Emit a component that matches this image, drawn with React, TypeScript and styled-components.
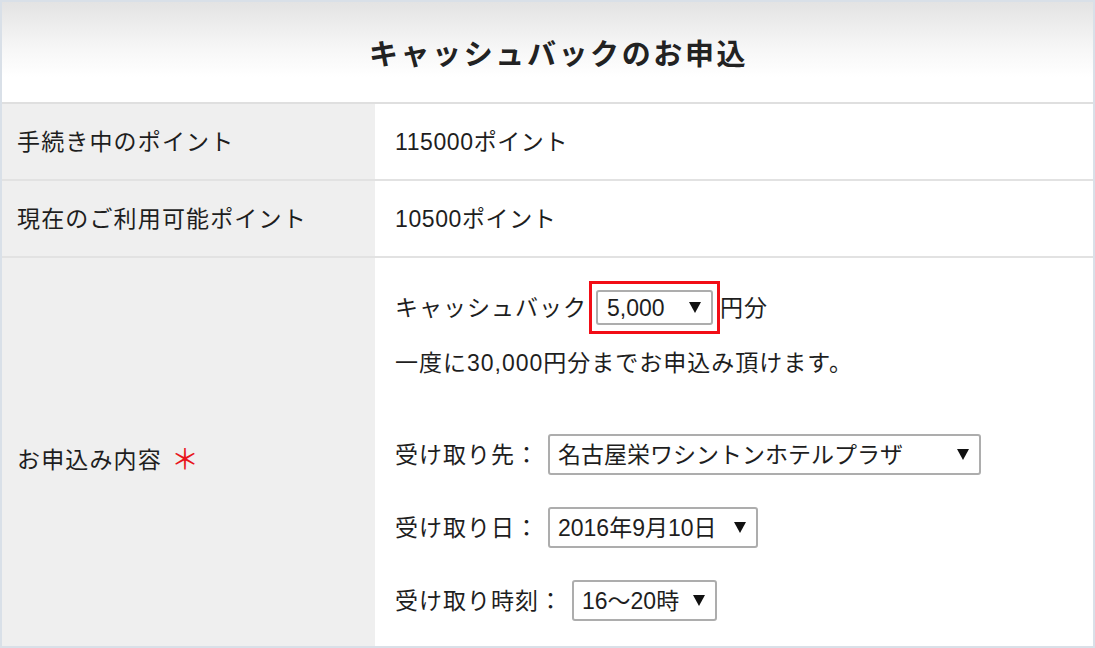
import styled, { createGlobalStyle } from 'styled-components';

const GlobalStyle = createGlobalStyle`
  html, body {
    margin: 0;
    padding: 0;
    background: #ffffff;
  }
  body {
    font-family: 'Liberation Sans', 'Noto Sans CJK JP', sans-serif;
    color: #1e1e1e;
  }
`;

const Frame = styled.div`
  box-sizing: border-box;
  width: 1095px;
  height: 648px;
  border: 2px solid #d9e0e8;
  display: flex;
  flex-direction: column;
  overflow: hidden;
`;

const Header = styled.div`
  height: 100px;
  flex-shrink: 0;
  border-bottom: 2px solid #dfdfdf;
  background: linear-gradient(to bottom, #e3e3e3 0%, #f6f6f6 45%, #ffffff 75%);
  display: flex;
  align-items: center;
  justify-content: center;
  padding-left: 22px;
`;

const Title = styled.h1`
  margin: 0;
  font-size: 29px;
  font-weight: 700;
  letter-spacing: 2.6px;
  color: #222;
`;

const Row = styled.div<{ $tall?: boolean }>`
  display: grid;
  grid-template-columns: 373px 1fr;
  flex: ${(p) => (p.$tall ? '1' : '0 0 75px')};
  border-bottom: ${(p) => (p.$tall ? 'none' : '2px solid #e2e2e2')};
`;

const Label = styled.div<{ $shift?: number }>`
  background: #efefef;
  display: flex;
  align-items: center;
  padding-left: 15px;
  padding-top: ${(p) => p.$shift ?? 0}px;
  padding-bottom: 4px;
  font-size: 23px;
  letter-spacing: 1.15px;
`;

const Required = styled.span`
  color: #e8141c;
  font-family: 'Noto Sans CJK JP', sans-serif;
  font-size: 28px;
  margin-left: 9px;
  line-height: 1;
`;

const Value = styled.div`
  display: flex;
  align-items: center;
  padding-left: 20px;
  padding-bottom: 4px;
  font-size: 23px;
  letter-spacing: 0.6px;
`;

const Form = styled.div`
  display: flex;
  flex-direction: column;
  padding: 23px 0 0 20px;
  font-size: 23px;
  letter-spacing: 1px;
`;

const Line = styled.div<{ $mt?: number; $gap?: number }>`
  display: flex;
  align-items: center;
  margin-top: ${(p) => p.$mt ?? 0}px;
  gap: ${(p) => p.$gap ?? 0}px;
  line-height: 30px;
`;

const Highlight = styled.div`
  border: 3px solid #f20d16;
  padding: 6px 4px;
  margin-left: 2px;
  display: flex;
`;

const SelectBox = styled.div<{ $w: number; $h?: number; $pl?: number }>`
  box-sizing: border-box;
  width: ${(p) => p.$w}px;
  height: ${(p) => p.$h ?? 41}px;
  border: 2px solid #adadad;
  border-radius: 3px;
  background: #fff;
  display: flex;
  align-items: center;
  justify-content: space-between;
  padding: 0 10px 0 ${(p) => p.$pl ?? 8}px;
  font-size: 23px;
  letter-spacing: 0;
  white-space: nowrap;
`;

const Arrow = styled.span`
  width: 0;
  height: 0;
  border-left: 6px solid transparent;
  border-right: 6px solid transparent;
  border-top: 11px solid #111;
  flex-shrink: 0;
`;

export default function App() {
  return (
    <>
      <GlobalStyle />
      <Frame>
        <Header>
          <Title>キャッシュバックのお申込</Title>
        </Header>
        <Row>
          <Label>手続き中のポイント</Label>
          <Value>115000ポイント</Value>
        </Row>
        <Row>
          <Label>現在のご利用可能ポイント</Label>
          <Value>10500ポイント</Value>
        </Row>
        <Row $tall>
          <Label $shift={16}>
            お申込み内容<Required>＊</Required>
          </Label>
          <Form>
            <Line>
              キャッシュバック
              <Highlight>
                <SelectBox $w={117} $h={35} $pl={9}>
                  <span>5,000</span>
                  <Arrow />
                </SelectBox>
              </Highlight>
              円分
            </Line>
            <Line $mt={14}>一度に30,000円分までお申込み頂けます。</Line>
            <Line $mt={56} $gap={9}>
              受け取り先：
              <SelectBox $w={433}>
                <span>名古屋栄ワシントンホテルプラザ</span>
                <Arrow />
              </SelectBox>
            </Line>
            <Line $mt={32} $gap={9}>
              受け取り日：
              <SelectBox $w={210}>
                <span>2016年9月10日</span>
                <Arrow />
              </SelectBox>
            </Line>
            <Line $mt={32} $gap={9}>
              受け取り時刻：
              <SelectBox $w={145}>
                <span>16〜20時</span>
                <Arrow />
              </SelectBox>
            </Line>
          </Form>
        </Row>
      </Frame>
    </>
  );
}
